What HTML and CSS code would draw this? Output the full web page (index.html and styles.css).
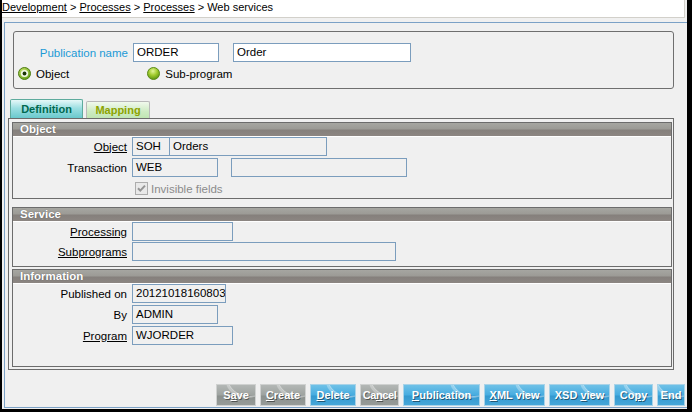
FILE: index.html
```html
<!DOCTYPE html>
<html>
<head>
<meta charset="utf-8">
<link rel="stylesheet" href="styles.css">
</head>
<body>
<div class="frame">
  <div class="crumbs"><a class="lnk">Development</a> &gt; <a class="lnk">Processes</a> &gt; <a class="lnk">Processes</a> &gt; Web services</div>
  <div class="main">
    <div class="head">
      <div class="head-row">
        <span class="pub-label">Publication name</span>
        <span class="inp white w-order">ORDER</span>
        <span class="inp white w-order2">Order</span>
      </div>
      <div class="radio-row">
        <svg class="radio r1" width="13" height="13" viewBox="0 0 13 13">
          <defs><radialGradient id="g1" cx="40%" cy="35%" r="70%"><stop offset="0" stop-color="#d9f07a"/><stop offset="1" stop-color="#5e9a12"/></radialGradient></defs>
          <circle cx="6.5" cy="6.5" r="6" fill="url(#g1)" stroke="#4f7d12" stroke-width="1"/>
          <circle cx="6.5" cy="6.5" r="3.6" fill="#f4f8e8"/>
          <circle cx="6.5" cy="6.5" r="1.9" fill="#1c3606"/>
        </svg>
        <span class="rtext">Object</span>
        <svg class="radio r2" width="13" height="13" viewBox="0 0 13 13">
          <defs><radialGradient id="g2" cx="45%" cy="30%" r="70%"><stop offset="0" stop-color="#e2f59a"/><stop offset="0.5" stop-color="#a2cc2e"/><stop offset="1" stop-color="#5c9410"/></radialGradient></defs>
          <circle cx="6.5" cy="6.5" r="6" fill="url(#g2)" stroke="#5a8a18" stroke-width="1"/>
        </svg>
        <span class="rtext">Sub-program</span>
      </div>
    </div>

    <div class="tabs">
      <div class="tab tab-def">Definition</div>
      <div class="tab tab-map">Mapping</div>
    </div>

    <div class="panel">
      <div class="sec sec-object">
        <div class="sec-title">Object</div>
        <div class="sec-body">
          <div class="row">
            <span class="lbl"><u>Object</u></span>
            <span class="inp w-soh">SOH</span><span class="inp w-orders">Orders</span>
          </div>
          <div class="row">
            <span class="lbl">Transaction</span>
            <span class="inp w-86">WEB</span>
            <span class="inp w-tr2"></span>
          </div>
          <div class="row">
            <span class="lbl"></span>
            <svg class="chk" width="13" height="13" viewBox="0 0 13 13">
              <rect x="0.5" y="0.5" width="12" height="12" fill="#e9e9e9" stroke="#adadad"/>
              <path d="M3 6.2 L5.3 8.6 L10 3.6" fill="none" stroke="#959595" stroke-width="2"/>
            </svg>
            <span class="dis">Invisible fields</span>
          </div>
        </div>
      </div>

      <div class="sec sec-service">
        <div class="sec-title">Service</div>
        <div class="sec-body tight">
          <div class="row">
            <span class="lbl"><u>Processing</u></span>
            <span class="inp w-101"></span>
          </div>
          <div class="row">
            <span class="lbl"><u>Subprograms</u></span>
            <span class="inp w-sub"></span>
          </div>
        </div>
      </div>

      <div class="sec sec-info">
        <div class="sec-title">Information</div>
        <div class="sec-body">
          <div class="row">
            <span class="lbl">Published on</span>
            <span class="inp w-pub">20121018160803</span>
          </div>
          <div class="row">
            <span class="lbl">By</span>
            <span class="inp w-86">ADMIN</span>
          </div>
          <div class="row">
            <span class="lbl"><u>Program</u></span>
            <span class="inp w-101">WJORDER</span>
          </div>
        </div>
      </div>
    </div>

    <div class="buttons">
      <span class="btn gray b-save">S<u>a</u>ve</span>
      <span class="btn gray b-create"><u>C</u>reate</span>
      <span class="btn blue b-delete"><u>D</u>elete</span>
      <span class="btn gray b-cancel">Ca<u>n</u>cel</span>
      <span class="btn blue b-pub"><u>P</u>ublication</span>
      <span class="btn blue b-xml"><u>X</u>ML view</span>
      <span class="btn blue b-xsd">XSD <u>v</u>iew</span>
      <span class="btn blue b-copy">Co<u>p</u>y</span>
      <span class="btn blue b-end">End</span>
    </div>
  </div>
</div>
</body>
</html>
```

FILE: styles.css
```css
* { box-sizing: border-box; }
html, body { margin: 0; padding: 0; }
body {
  background: #000;
  width: 692px;
  height: 412px;
  overflow: hidden;
  font-family: "Liberation Sans", Arial, sans-serif;
  font-size: 11px;
  color: #000;
}
.frame {
  margin-left: 2px;
  width: 685px;
  height: 409px;
  background: #f0f0f0;
  display: flex;
  flex-direction: column;
}
.crumbs {
  height: 18px;
  width: 683px;
  background: #fff;
  border-bottom: 1px solid #d2d0ca;
  border-right: 1px solid #d2d0ca;
  line-height: 14px;
  padding-left: 0;
  white-space: nowrap;
}
.lnk { text-decoration: underline; color: #000; }

.main {
  margin-top: 4px;
  margin-left: 2px;
  width: 683px;
  height: 386px;
  border: 1px solid #7ba1c6;
  border-right: none;
  display: flex;
  flex-direction: column;
}

/* header box */
.head {
  margin: 8px 0 0 8px;
  width: 661px;
  height: 58px;
  border: 1px solid #6f6f6f;
  border-radius: 3px;
  padding-top: 11px;
}
.head-row {
  display: flex;
  align-items: center;
  height: 19px;
}
.pub-label {
  width: 114px;
  text-align: right;
  color: #1c9ad6;
  font-size: 11.5px;
}
.inp {
  display: inline-block;
  height: 19px;
  border: 1px solid #7b9dbd;
  line-height: 17px;
  padding-left: 3px;
  white-space: nowrap;
  overflow: hidden;
  background: #f0f0f0;
  font-size: 11.5px;
}
.inp.white { background: #fff; }
.w-order { margin-left: 5px; width: 86px; }
.w-order2 { margin-left: 14px; width: 178px; }

.radio-row {
  display: flex;
  align-items: center;
  height: 13px;
  margin-top: 5px;
}
.radio { display: block; flex: none; }
.r1 { margin-left: 4px; }
.rtext { margin-left: 5px; font-size: 11.5px; }
.r2 { margin-left: 78px; }

/* tabs */
.tabs {
  display: flex;
  align-items: flex-end;
  margin: 10px 0 0 5px;
  height: 19px;
}
.tab {
  font-weight: bold;
  text-align: center;
  border-radius: 2px 2px 0 0;
}
.tab-def {
  width: 73px;
  height: 19px;
  line-height: 18px;
  color: #00694f;
  border: 1px solid #5eab9d;
  border-bottom: none;
  background: linear-gradient(#e6f8f8, #9ddfe2 45%, #6ac9cd);
}
.tab-map {
  margin-left: 3px;
  width: 64px;
  height: 17px;
  line-height: 17px;
  color: #8da300;
  border: 1px solid #b9b9b9;
  border-bottom: none;
  background: linear-gradient(#f1f9ed, #cdebc2 60%, #c0e6b3);
}

/* main panel */
.panel {
  margin-left: 3px;
  width: 666px;
  height: 252px;
  border: 1px solid #6c6c6c;
  padding: 3px 1px 2px 3px;
}
.sec {
  border: 1px solid #6c6c6c;
  background: #f0f0f0;
}
.sec-object { height: 77px; }
.sec-service { height: 60px; margin-top: 8px; }
.sec-info { height: 98px; margin-top: 2px; }
.sec-title {
  height: 13px;
  line-height: 12px;
  padding-left: 7px;
  color: #fff;
  font-weight: bold;
  font-size: 11.5px;
  text-shadow: 0 0 1px #555;
  background: linear-gradient(#a6a6a1 0%, #9c9b96 45%, #85807c 55%, #8c8682 100%);
}
.sec-body {
  border-top: 1px solid #fff;
  display: flex;
  flex-direction: column;
  gap: 2px;
}
.sec-body.tight { gap: 1px; }
.row {
  display: flex;
  align-items: center;
  height: 19px;
}
.lbl {
  width: 114px;
  text-align: right;
  margin-right: 5px;
  flex: none;
  font-size: 11.5px;
}
.w-soh { width: 38px; }
.w-orders { width: 158px; margin-left: -1px; }
.w-86 { width: 86px; }
.w-tr2 { width: 176px; margin-left: 13px; }
.w-101 { width: 101px; }
.w-sub { width: 264px; }
.w-pub { width: 94px; }
.chk { margin-left: 3px; flex: none; }
.dis { color: #8b8b8b; margin-left: 3px; font-size: 11.5px; }

/* buttons */
.buttons {
  margin-top: 14px;
  display: flex;
  justify-content: flex-end;
  gap: 4px;
  padding-right: 2px;
}
.btn {
  position: relative;
  height: 22px;
  line-height: 20px;
  text-align: center;
  color: #fff;
  font-weight: bold;
  font-size: 11px;
  white-space: nowrap;
  text-shadow: 1px 1px 0 rgba(0,0,0,0.45);
  overflow: hidden;
}
.btn::after {
  content: "";
  position: absolute;
  right: -18px;
  top: -26px;
  width: 44px;
  height: 36px;
  border-radius: 50%;
  border: 1px solid rgba(255,255,255,0.45);
  box-shadow: -3px 3px 0 -2px rgba(255,255,255,0.3);
}
.btn.blue {
  border: 1px solid #a9d3e8;
  background: linear-gradient(#6fc1e7, #46ace0 50%, #3499cf 55%, #45a6d8);
}
.btn.gray {
  border: 1px solid #cfd1d0;
  background: linear-gradient(#b3b7b5, #9ea3a0 50%, #8b908d 55%, #969b98);
}
.b-save { width: 40px; }
.b-create { width: 46px; }
.b-delete { width: 46px; }
.b-cancel { width: 39px; letter-spacing: -0.4px; }
.b-pub { width: 77px; }
.b-xml { width: 61px; }
.b-xsd { width: 61px; }
.b-copy { width: 39px; }
.b-end { width: 28px; }
```
